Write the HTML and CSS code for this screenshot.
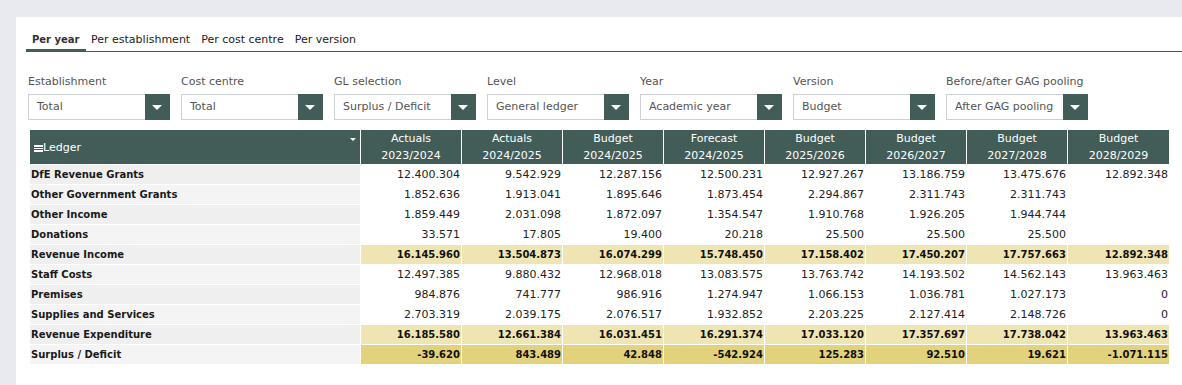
FILE: index.html
```html
<!DOCTYPE html>
<html lang="en">
<head>
    <meta charset="UTF-8">
    <title>Ledger - Per year</title>
    <link rel="stylesheet" href="styles.css">
</head>
<body>
    <div class="panel">
        <div class="tabs">
            <span class="tab active">Per year</span>
            <span class="tab">Per establishment</span>
            <span class="tab">Per cost centre</span>
            <span class="tab">Per version</span>
        </div>

        <div class="filters">
            <div class="filter">
                <label>Establishment</label>
                <div class="select"><span class="select-value">Total</span><span class="select-btn"></span></div>
            </div>
            <div class="filter">
                <label>Cost centre</label>
                <div class="select"><span class="select-value">Total</span><span class="select-btn"></span></div>
            </div>
            <div class="filter">
                <label>GL selection</label>
                <div class="select"><span class="select-value">Surplus / Deficit</span><span class="select-btn"></span></div>
            </div>
            <div class="filter">
                <label>Level</label>
                <div class="select"><span class="select-value">General ledger</span><span class="select-btn"></span></div>
            </div>
            <div class="filter">
                <label>Year</label>
                <div class="select"><span class="select-value">Academic year</span><span class="select-btn"></span></div>
            </div>
            <div class="filter">
                <label>Version</label>
                <div class="select"><span class="select-value">Budget</span><span class="select-btn"></span></div>
            </div>
            <div class="filter">
                <label>Before/after GAG pooling</label>
                <div class="select"><span class="select-value">After GAG pooling</span><span class="select-btn"></span></div>
            </div>
        </div>

        <table class="ledger-table">
            <colgroup>
                <col class="col-ledger">
                <col span="8" class="col-num">
            </colgroup>
            <thead>
                <tr>
                    <th class="ledger-head">
                        <span class="menu-icon"></span>Ledger
                        <span class="sort-caret"></span>
                    </th>
                    <th>Actuals<br>2023/2024</th>
                    <th>Actuals<br>2024/2025</th>
                    <th>Budget<br>2024/2025</th>
                    <th>Forecast<br>2024/2025</th>
                    <th>Budget<br>2025/2026</th>
                    <th>Budget<br>2026/2027</th>
                    <th>Budget<br>2027/2028</th>
                    <th>Budget<br>2028/2029</th>
                </tr>
            </thead>
            <tbody id="ledgerBody"></tbody>
        </table>
    </div>

    <script>
        const rows = [
            { name: 'DfE Revenue Grants', values: ['12.400.304', '9.542.929', '12.287.156', '12.500.231', '12.927.267', '13.186.759', '13.475.676', '12.892.348'] },
            { name: 'Other Government Grants', values: ['1.852.636', '1.913.041', '1.895.646', '1.873.454', '2.294.867', '2.311.743', '2.311.743', ''] },
            { name: 'Other Income', values: ['1.859.449', '2.031.098', '1.872.097', '1.354.547', '1.910.768', '1.926.205', '1.944.744', ''] },
            { name: 'Donations', values: ['33.571', '17.805', '19.400', '20.218', '25.500', '25.500', '25.500', ''] },
            { name: 'Revenue Income', type: 'subtotal', values: ['16.145.960', '13.504.873', '16.074.299', '15.748.450', '17.158.402', '17.450.207', '17.757.663', '12.892.348'] },
            { name: 'Staff Costs', values: ['12.497.385', '9.880.432', '12.968.018', '13.083.575', '13.763.742', '14.193.502', '14.562.143', '13.963.463'] },
            { name: 'Premises', values: ['984.876', '741.777', '986.916', '1.274.947', '1.066.153', '1.036.781', '1.027.173', '0'] },
            { name: 'Supplies and Services', values: ['2.703.319', '2.039.175', '2.076.517', '1.932.852', '2.203.225', '2.127.414', '2.148.726', '0'] },
            { name: 'Revenue Expenditure', type: 'subtotal', values: ['16.185.580', '12.661.384', '16.031.451', '16.291.374', '17.033.120', '17.357.697', '17.738.042', '13.963.463'] },
            { name: 'Surplus / Deficit', type: 'total', values: ['-39.620', '843.489', '42.848', '-542.924', '125.283', '92.510', '19.621', '-1.071.115'] }
        ];

        document.getElementById('ledgerBody').innerHTML = rows.map(row => `
            <tr class="${row.type || ''}">
                <td class="ledger-name">${row.name}</td>
                ${row.values.map(v => `<td class="num">${v}</td>`).join('')}
            </tr>
        `).join('');
    </script>
</body>
</html>
```

FILE: styles.css
```css
* {
    box-sizing: border-box;
    margin: 0;
    padding: 0;
}

body {
    font-family: "DejaVu Sans", sans-serif;
    font-size: 11px;
    background: #e9eaef;
    color: #1a1a1a;
}

.panel {
    background: white;
    margin: 17px 0 0 16px;
    padding: 13px 0 20px 12px;
    height: 368px;
}

/* tabs */
.tabs {
    display: flex;
    border-bottom: 1px solid #425c58;
    margin-left: -2px;
}

.tab {
    padding: 2px 5.5px 2px;
    line-height: 16px;
    color: #222;
    border-bottom: 2px solid transparent;
    margin-bottom: -1px;
}

.tab.active {
    font-weight: bold;
    font-size: 10px;
    border-bottom: 3px solid #425c58;
    padding: 2px 6px 1px;
    color: #333;
}

/* filters */
.filters {
    display: flex;
    gap: 11px;
    margin-top: 22px;
}

.filter label {
    display: block;
    color: #555;
    line-height: 16px;
    margin-bottom: 4px;
}

.select {
    display: flex;
    width: 142px;
    height: 26px;
    border: 1px solid #cdd0d4;
}

.select-value {
    flex: 1;
    padding-left: 8px;
    line-height: 24px;
    color: #555;
    white-space: nowrap;
    overflow: hidden;
}

.select-btn {
    width: 25px;
    height: 26px;
    margin: -1px -1px 0 0;
    background: #425c58;
    position: relative;
}

.select-btn::after {
    content: "";
    position: absolute;
    left: 7px;
    top: 11px;
    border-left: 5px solid transparent;
    border-right: 5px solid transparent;
    border-top: 5px solid white;
}

/* table */
.ledger-table {
    margin: 10px 0 0 2px;
    border-collapse: separate;
    border-spacing: 0;
    table-layout: fixed;
    width: 1139px;
}

.col-ledger {
    width: 331px;
}

.col-num {
    width: 101px;
}

.ledger-table th,
.ledger-table td {
    border-right: 1px solid white;
    border-bottom: 1px solid white;
    white-space: nowrap;
}

.ledger-table th:last-child,
.ledger-table td:last-child {
    border-right: none;
}

.ledger-table th {
    background: #425c58;
    color: white;
    font-weight: normal;
    line-height: 17px;
    height: 35px;
    text-align: center;
}

.ledger-table th.ledger-head {
    text-align: left;
    padding-left: 4px;
    position: relative;
}

.menu-icon {
    display: inline-block;
    width: 9px;
    height: 7px;
    border-top: 2px solid white;
    border-bottom: 2px solid white;
    position: relative;
    vertical-align: -1px;
}

.menu-icon::after {
    content: "";
    position: absolute;
    left: 0;
    right: 0;
    top: 1px;
    border-top: 1.5px solid white;
}

.sort-caret {
    position: absolute;
    right: 4px;
    top: 8px;
    border-left: 3.5px solid transparent;
    border-right: 3.5px solid transparent;
    border-top: 3.5px solid white;
}

.ledger-table td {
    height: 20px;
    line-height: 19px;
}

.ledger-name {
    font-weight: bold;
    font-size: 10px;
    padding-left: 1px;
    background: #efefef;
}

tbody tr:nth-child(even) .ledger-name {
    background: #f4f4f4;
}

.num {
    text-align: right;
    padding-right: 1px;
    color: #222;
}

tr.subtotal .num {
    background: #efe5b3;
    font-weight: bold;
    font-size: 10px;
    color: #111;
}

tr.total .num {
    background: #e3d27c;
    font-weight: bold;
    font-size: 10px;
    color: #111;
}
```
